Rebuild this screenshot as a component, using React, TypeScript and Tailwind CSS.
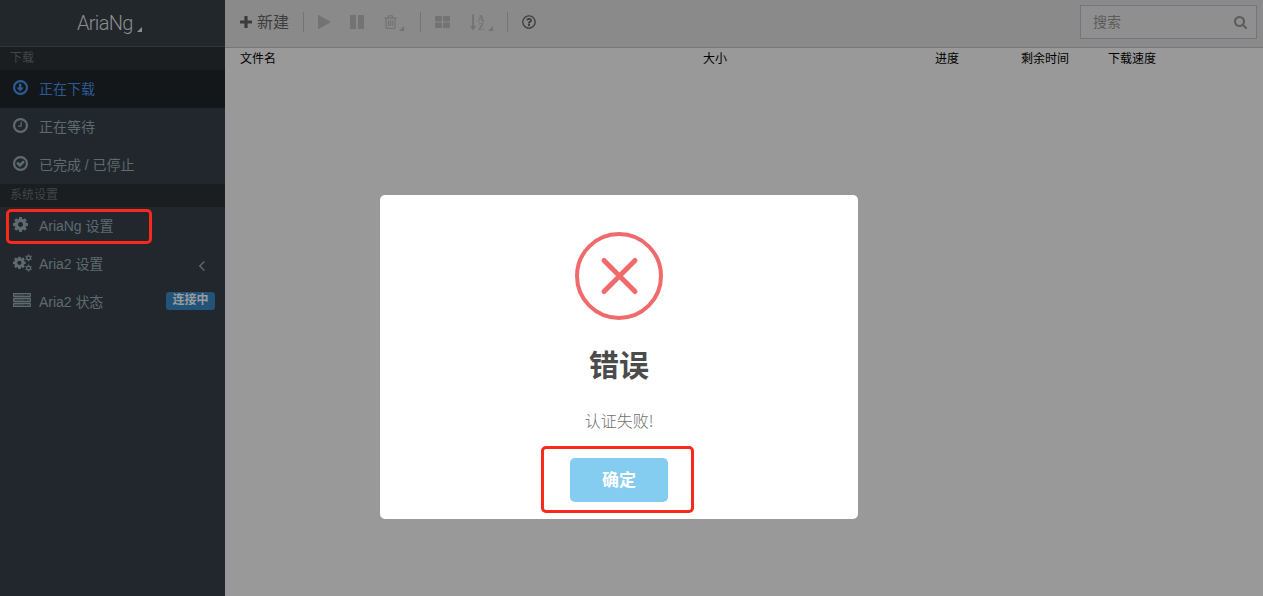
import type { ReactNode } from "react";
import { FaRegQuestionCircle } from "react-icons/fa";

const RING =
  "M896 352q-148 0-273 73t-198 198-73 273 73 273 198 198 273 73 273-73 198-198 73-273-73-273-198-198-273-73zm768 544q0 209-103 385.5t-279.5 279.5-385.5 103-385.5-103-279.5-279.5-103-385.5 103-385.5 279.5-279.5 385.5-103 385.5 103 279.5 279.5 103 385.5z";
const DOWN =
  "M1216 928q0 14-10 24l-319 319q-10 9-23 9-12 0-23-9l-320-320q-15-16-7-35 8-20 30-20h192v-352q0-14 9-23t23-9h192q14 0 23 9t9 23v352h192q14 0 23 9t9 23z";
const CLOCK =
  "M1024 544v448q0 14-9 23t-23 9h-320q-14 0-23-9t-9-23v-64q0-14 9-23t23-9h224v-352q0-14 9-23t23-9h64q14 0 23 9t9 23z";
const CHECK =
  "M1299 813l-422 422q-19 19-45 19t-45-19l-294-294q-19-19-19-45t19-45l102-102q19-19 45-19t45 19l147 147 275-275q19-19 45-19t45 19l102 102q19 19 19 45t-19 45z";
const COG =
  "M1152 896q0-106-75-181t-181-75-181 75-75 181 75 181 181 75 181-75 75-181zm512-109v222q0 12-8 23t-20 13l-185 28q-19 54-39 91 35 50 107 138 10 12 10 25t-9 23q-27 37-99 108t-94 71q-12 0-26-9l-138-108q-44 23-91 38-16 136-29 186-7 28-36 28h-222q-14 0-24.5-8.5t-11.5-21.5l-28-184q-49-16-90-37l-141 107q-10 9-25 9-14 0-25-11-126-114-165-168-7-10-7-23 0-12 8-23 15-21 51-66.5t54-70.5q-27-50-41-99l-183-27q-13-2-21-12.5t-8-23.5v-222q0-12 8-23t19-13l186-28q14-46 39-92-40-57-107-138-10-12-10-24 0-10 9-23 26-36 98.5-107.5t94.5-71.5q13 0 26 10l138 107q44-23 91-38 16-136 29-186 7-28 36-28h222q14 0 24.5 8.5t11.5 21.5l28 184q49 16 90 37l142-107q9-9 24-9 13 0 25 10 129 119 165 170 7 8 7 22 0 12-8 23-15 21-51 66.5t-54 70.5q26 50 41 98l183 28q13 2 21 12.5t8 23.5z";
const SEARCH =
  "M1216 832q0-185-131.5-316.5t-316.5-131.5-316.5 131.5-131.5 316.5 131.5 316.5 316.5 131.5 316.5-131.5 131.5-316.5zm512 832q0 52-38 90t-90 38q-54 0-90-38l-343-342q-179 124-399 124-143 0-273.5-55.5t-225-150-150-225-55.5-273.5 55.5-273.5 150-225 225-150 273.5-55.5 273.5 55.5 225 150 150 225 55.5 273.5q0 220-124 399l343 343q37 37 37 90z";

function Glyph({ paths, box = "128 128 1536 1536", className }: { paths: string[]; box?: string; className: string }) {
  return (
    <svg viewBox={box} className={className} fill="currentColor">
      {paths.map((d) => (
        <path key={d} d={d} />
      ))}
    </svg>
  );
}

function SmallCog({ cx, cy }: { cx: number; cy: number }) {
  return (
    <g transform={`translate(${cx} ${cy})`} fill="none" stroke="currentColor">
      <circle r="1.9" strokeWidth="1.3" />
      <path
        d="M0 -2.3V-3.4M0 2.3V3.4M-2.1 -1.2L-3 -1.7M2.1 -1.2L3 -1.7M-2.1 1.2L-3 1.7M2.1 1.2L3 1.7"
        strokeWidth="1.3"
      />
    </g>
  );
}

function Cogs() {
  return (
    <svg viewBox="0 0 19 18" className="h-[18px] w-[19px] shrink-0" fill="currentColor">
      <svg x="0" y="2.4" width="12.8" height="12.8" viewBox="128 128 1536 1536">
        <path d={COG} />
      </svg>
      <SmallCog cx={15.6} cy={3.8} />
      <SmallCog cx={15.6} cy={14} />
    </svg>
  );
}

function Server() {
  return (
    <svg viewBox="0 0 18 14" className="mb-[2px] h-[14px] w-[18px] shrink-0" fill="none" stroke="currentColor">
      {[0, 5, 10].map((y) => (
        <g key={y}>
          <rect x="0.6" y={y + 0.5} width="16.8" height="3" rx="0.4" strokeWidth="1.3" />
          <path d={`M1 ${y + 2}H11.5M14 ${y + 2}H16`} strokeWidth="1" opacity="0.6" />
        </g>
      ))}
    </svg>
  );
}

function Section({ children }: { children: ReactNode }) {
  return (
    <div className="h-[23px] bg-[#1a1e20] pl-[10px] text-[12px] leading-[22px] text-[#434546]">{children}</div>
  );
}

function Item({ icon, label, active, extra }: { icon: ReactNode; label: string; active?: boolean; extra?: ReactNode }) {
  return (
    <a
      className={
        active
          ? "flex h-[38px] items-center bg-[#131719] pl-[13px] text-[#2c5b94]"
          : "flex h-[38px] items-center pl-[13px] text-[#5e6b6d]"
      }
    >
      <span className="flex w-[26px] shrink-0 items-center pb-[3px]">{icon}</span>
      <span className="grow text-[14px] tracking-[-0.03px] whitespace-nowrap">{label}</span>
      {extra}
    </a>
  );
}

function Corner({ className }: { className: string }) {
  return (
    <svg viewBox="0 0 5 5" className={className} fill="currentColor">
      <path d="M5 0V5H0Z" />
    </svg>
  );
}

export default function App() {
  return (
    <div className="relative flex h-[596px] w-[1263px] overflow-hidden bg-[#999999] font-['Liberation_Sans','Noto_Sans_CJK_SC',sans-serif]">
      <aside className="flex w-[225px] shrink-0 flex-col bg-[#22272e]">
        <div className="flex h-[47px] items-center border-b border-[#30363a] bg-[#21272a] pl-[77px] text-[#8c8e8f]">
          <span className="font-['Roboto','Liberation_Sans',sans-serif] text-[20px] leading-[24px] font-light tracking-[-0.7px]">
            AriaNg
          </span>
          <Corner className="mt-[12px] ml-[4px] size-[5px]" />
        </div>
        <Section>下载</Section>
        <Item active icon={<Glyph paths={[RING, DOWN]} className="size-[15px]" />} label="正在下载" />
        <Item icon={<Glyph paths={[RING, CLOCK]} className="size-[15px]" />} label="正在等待" />
        <Item icon={<Glyph paths={[RING, CHECK]} className="size-[15px]" />} label="已完成 / 已停止" />
        <Section>系统设置</Section>
        <Item icon={<Glyph paths={[COG]} className="size-[15px]" />} label="AriaNg 设置" />
        <Item
          icon={<Cogs />}
          label="Aria2 设置"
          extra={
            <svg viewBox="0 0 6 10" className="mt-[4px] mr-[20px] h-[10px] w-[6px]" fill="none" stroke="currentColor" strokeWidth="1.3">
              <path d="M5.4 0.5L0.8 5L5.4 9.5" />
            </svg>
          }
        />
        <Item
          icon={<Server />}
          label="Aria2 状态"
          extra={
            <span className="mr-[10px] mb-[2px] flex h-[18px] w-[49px] items-center justify-center rounded-[3px] bg-[#235378] pb-[2px] text-[12px] leading-none font-bold text-[#999c9e]">
              连接中
            </span>
          }
        />
      </aside>

      <main className="flex grow flex-col">
        <header className="flex h-[48px] items-center border-b border-[#777777] bg-[#8a8a8a] pr-[6px] pb-[3px] pl-[15px] text-[#737373]">
          <svg viewBox="0 0 12 12" className="size-[12px] text-[#3b3b3b]" fill="currentColor">
            <path d="M4.4 0.6Q4.4 0 5 0H7Q7.6 0 7.6 0.6V4.4H11.4Q12 4.4 12 5V7Q12 7.6 11.4 7.6H7.6V11.4Q7.6 12 7 12H5Q4.4 12 4.4 11.4V7.6H0.6Q0 7.6 0 7V5Q0 4.4 0.6 4.4H4.4Z" />
          </svg>
          <span className="mt-[2px] ml-[5px] text-[16px] leading-[24px] text-[#3d3d3d]">新建</span>
          <span className="ml-[14px] h-[20px] w-px bg-[#747474]" />
          <svg viewBox="0 0 13 14" className="ml-[14px] h-[14px] w-[13px]" fill="currentColor">
            <path d="M0 0.4Q0 -0.2 0.6 0.1L12.6 6.7Q13 7 12.6 7.3L0.6 13.9Q0 14.2 0 13.6Z" />
          </svg>
          <svg viewBox="0 0 14 14" className="ml-[19px] size-[14px]" fill="currentColor">
            <rect width="6" height="14" rx="0.6" />
            <rect x="8" width="6" height="14" rx="0.6" />
          </svg>
          <svg viewBox="0 0 13 14" className="ml-[20px] h-[14px] w-[13px]" fill="none" stroke="currentColor" strokeWidth="1.25">
            <path d="M0.3 3H12.7M4 2.9L4.7 0.8H8.3L9 2.9M2 3V12.2Q2 13.4 3 13.4H10Q11 13.4 11 12.2V3M4.5 5.3V11M6.5 5.3V11M8.5 5.3V11" />
          </svg>
          <Corner className="mt-[12px] ml-[2px] size-[5px]" />
          <span className="ml-[16px] h-[20px] w-px bg-[#747474]" />
          <svg viewBox="0 0 15 12" className="ml-[14px] h-[12px] w-[15px]" fill="currentColor">
            <rect width="7" height="5.5" rx="1" />
            <rect x="8" width="7" height="5.5" rx="1" />
            <rect y="6.5" width="7" height="5.5" rx="1" />
            <rect x="8" y="6.5" width="7" height="5.5" rx="1" />
          </svg>
          <svg viewBox="0 0 16 17" className="ml-[20px] h-[17px] w-[16px]" fill="currentColor">
            <path d="M2.1 0.5H4V12.3H6.2L3.05 16.2L0 12.3H2.1Z" />
            <text x="7.6" y="7.6" fontSize="9.5" fontWeight="bold" fontFamily="Liberation Serif">A</text>
            <text x="8" y="16.2" fontSize="9.5" fontWeight="bold" fontFamily="Liberation Serif">Z</text>
          </svg>
          <Corner className="mt-[12px] ml-[2px] size-[5px]" />
          <span className="ml-[14px] h-[20px] w-px bg-[#747474]" />
          <FaRegQuestionCircle className="ml-[14px] size-[14px] text-[#3b3b3b]" />
          <div className="ml-auto flex h-[34px] w-[177px] items-center justify-between border border-[#75757d] bg-[#8f8f8f] pr-[9px] pl-[12px] text-[14px] text-[#5c5c5c]">
            <span>搜索</span>
            <Glyph paths={[SEARCH]} box="64 128 1664 1664" className="size-[13px]" />
          </div>
        </header>
        <div className="flex h-[22px] items-center pl-[15px] text-[12px] text-black">
          <span className="w-[463px]">文件名</span>
          <span className="w-[232px]">大小</span>
          <span className="w-[86px]">进度</span>
          <span className="w-[87px]">剩余时间</span>
          <span>下载速度</span>
        </div>
      </main>

      <div className="absolute top-[195px] left-[380px] flex h-[324px] w-[478px] flex-col items-center rounded-[5px] bg-white pt-[37px]">
        <svg viewBox="0 0 88 88" className="size-[88px]" fill="none" stroke="#f06a6c">
          <circle cx="44" cy="44" r="42" strokeWidth="4" />
          <path d="M29 28.5L60 59.5M60 28.5L29 59.5" strokeWidth="5" strokeLinecap="round" />
        </svg>
        <h2 className="mt-[26px] text-[30px] leading-[40px] font-bold text-[#4b4b4b]">错误</h2>
        <p className="mt-[22px] font-['Noto_Sans_CJK_SC',sans-serif] text-[16px] leading-[24px] font-light text-[#707070]">认证失败!</p>
        <button className="mt-[26px] flex h-[44px] w-[98px] items-center justify-center rounded-[5px] bg-[#84cdf1] pt-[2px] text-[17px] font-bold text-white">
          确定
        </button>
      </div>

      <div className="absolute top-[209px] left-[6px] h-[35px] w-[146px] rounded-[5px] border-3 border-[#fb281c]" />
      <div className="absolute top-[446px] left-[541px] h-[67px] w-[153px] rounded-[5px] border-3 border-[#fb281c]" />
    </div>
  );
}
